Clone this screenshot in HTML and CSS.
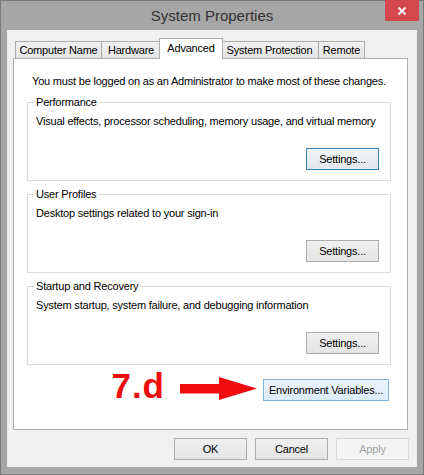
FILE: index.html
```html
<!DOCTYPE html>
<html lang="en">
<head>
    <meta charset="UTF-8">
    <title>System Properties</title>
    <link rel="stylesheet" href="styles.css">
</head>
<body>
    <div class="window">
        <div class="titlebar">
            <span class="title">System Properties</span>
            <div class="close">
                <svg width="10" height="10" viewBox="0 0 10 10">
                    <path d="M1.5 1.5 L8.5 8.5 M8.5 1.5 L1.5 8.5" stroke="#fff" stroke-width="1.8"/>
                </svg>
            </div>
        </div>

        <div class="client">
            <!-- tab strip -->
            <div class="tabs">
                <div class="tab">Computer Name</div>
                <div class="tab">Hardware</div>
                <div class="tab active">Advanced</div>
                <div class="tab">System Protection</div>
                <div class="tab">Remote</div>
            </div>

            <div class="panel">
                <p class="note">You must be logged on as an Administrator to make most of these changes.</p>

                <fieldset class="group">
                    <legend>Performance</legend>
                    <p class="desc">Visual effects, processor scheduling, memory usage, and virtual memory</p>
                    <div class="group-actions">
                        <button class="btn btn-default">Settings...</button>
                    </div>
                </fieldset>

                <fieldset class="group">
                    <legend>User Profiles</legend>
                    <p class="desc">Desktop settings related to your sign-in</p>
                    <div class="group-actions">
                        <button class="btn">Settings...</button>
                    </div>
                </fieldset>

                <fieldset class="group">
                    <legend>Startup and Recovery</legend>
                    <p class="desc">System startup, system failure, and debugging information</p>
                    <div class="group-actions">
                        <button class="btn">Settings...</button>
                    </div>
                </fieldset>

                <div class="env-row">
                    <span class="step">7.d</span>
                    <svg class="arrow" width="77" height="23" viewBox="0 0 77 23">
                        <polygon points="0,7 39,7 39,0 77,11.5 39,23 39,16.5 0,16.5" fill="#f00d0d"/>
                    </svg>
                    <button class="btn btn-hover btn-wide">Environment Variables...</button>
                </div>
            </div>

            <div class="dialog-actions">
                <button class="btn">OK</button>
                <button class="btn">Cancel</button>
                <button class="btn" disabled>Apply</button>
            </div>
        </div>
    </div>
</body>
</html>
```

FILE: styles.css
```css
body {
    margin: 0;
    font-family: "Liberation Sans", Arial, sans-serif;
    font-size: 11px;
    letter-spacing: -0.2px;
    color: #000;
}
.window {
    width: 424px;
    height: 475px;
    box-sizing: border-box;
    background-color: #a6a6a6;
    border: 1px solid #7a7a7a;
}
.titlebar {
    position: relative;
    height: 29px;
    line-height: 30px;
    text-align: center;
}
.title {
    font-size: 15px;
    letter-spacing: 0;
    color: #333;
}
.close {
    position: absolute;
    top: -1px;
    right: 4px;
    width: 34px;
    height: 21px;
    background-color: #d4474c;
    display: flex;
    align-items: center;
    justify-content: center;
}
.client {
    height: 437px;
    margin: 0 6px;
    padding-top: 8px;
    box-sizing: border-box;
    background-color: #f0f0f0;
}

/* tabs */
.tabs {
    display: flex;
    align-items: flex-end;
    padding-left: 8px;
    margin-bottom: -1px;
    white-space: nowrap;
}
.tab {
    height: 18px;
    line-height: 16px;
    box-sizing: border-box;
    text-align: center;
    border: 1px solid #adadad;
    background: linear-gradient(#f0f0f0, #e5e5e5);
    margin-left: -1px;
}
.tab:nth-child(1) { width: 87px; margin-left: 0; }
.tab:nth-child(2) { width: 60px; }
.tab:nth-child(4) { width: 99px; }
.tab:nth-child(5) { width: 47px; }
.tab.active {
    position: relative;
    z-index: 1;
    width: 64px;
    height: 21px;
    line-height: 18px;
    margin: 0 -2px;
    background: #fff;
    border-bottom: none;
}
.panel {
    height: 372px;
    margin: 0 9px 0 6px;
    padding: 15px 0 0 0;
    box-sizing: border-box;
    background-color: #fff;
    border: 1px solid #adadad;
}
.note {
    margin: 0 0 1px 18px;
    line-height: 15px;
    white-space: nowrap;
}

/* group boxes */
.group {
    margin: 6px 16px 0 13px;
    padding: 0 11px 10px 8px;
    border: 1px solid #dcdcdc;
    min-inline-size: 0;
}
.group legend {
    padding: 0 2px;
    margin-left: -2px;
    line-height: 15px;
}
.desc {
    margin: 4px 0 0 0;
    line-height: 15px;
    white-space: nowrap;
}
.group-actions {
    display: flex;
    justify-content: flex-end;
    margin-top: 19px;
}

/* buttons */
.btn {
    width: 73px;
    height: 22px;
    padding: 0;
    font-family: "Liberation Sans", Arial, sans-serif;
    font-size: 11px;
    letter-spacing: -0.2px;
    color: #000;
    border: 1px solid #acacac;
    background: linear-gradient(#f0f0f0, #e5e5e5);
    border-radius: 0;
    white-space: nowrap;
}
.btn-default {
    border-color: #3c7fb1;
    background: linear-gradient(#f2f5f8, #e3e7ec);
}
.btn-hover {
    border-color: #7eb4ea;
    background: linear-gradient(#ecf4fc, #dcecfc);
}
.btn-wide {
    width: 126px;
}
.btn:disabled {
    color: #a3a3a3;
    border-color: #d9d9d9;
    background: #f4f4f4;
}

/* annotation row */
.env-row {
    display: flex;
    justify-content: flex-end;
    align-items: flex-start;
    height: 22px;
    margin: 14px 18px 0 0;
}
.step {
    font-size: 35px;
    font-weight: bold;
    letter-spacing: 1px;
    line-height: 22px;
    color: #f00d0d;
    margin: -4px 15px 0 0;
}
.arrow {
    margin: -2px 6px 0 0;
}
.dialog-actions {
    display: flex;
    justify-content: flex-end;
    gap: 8px;
    margin: 8px 8px 0 0;
}
```
